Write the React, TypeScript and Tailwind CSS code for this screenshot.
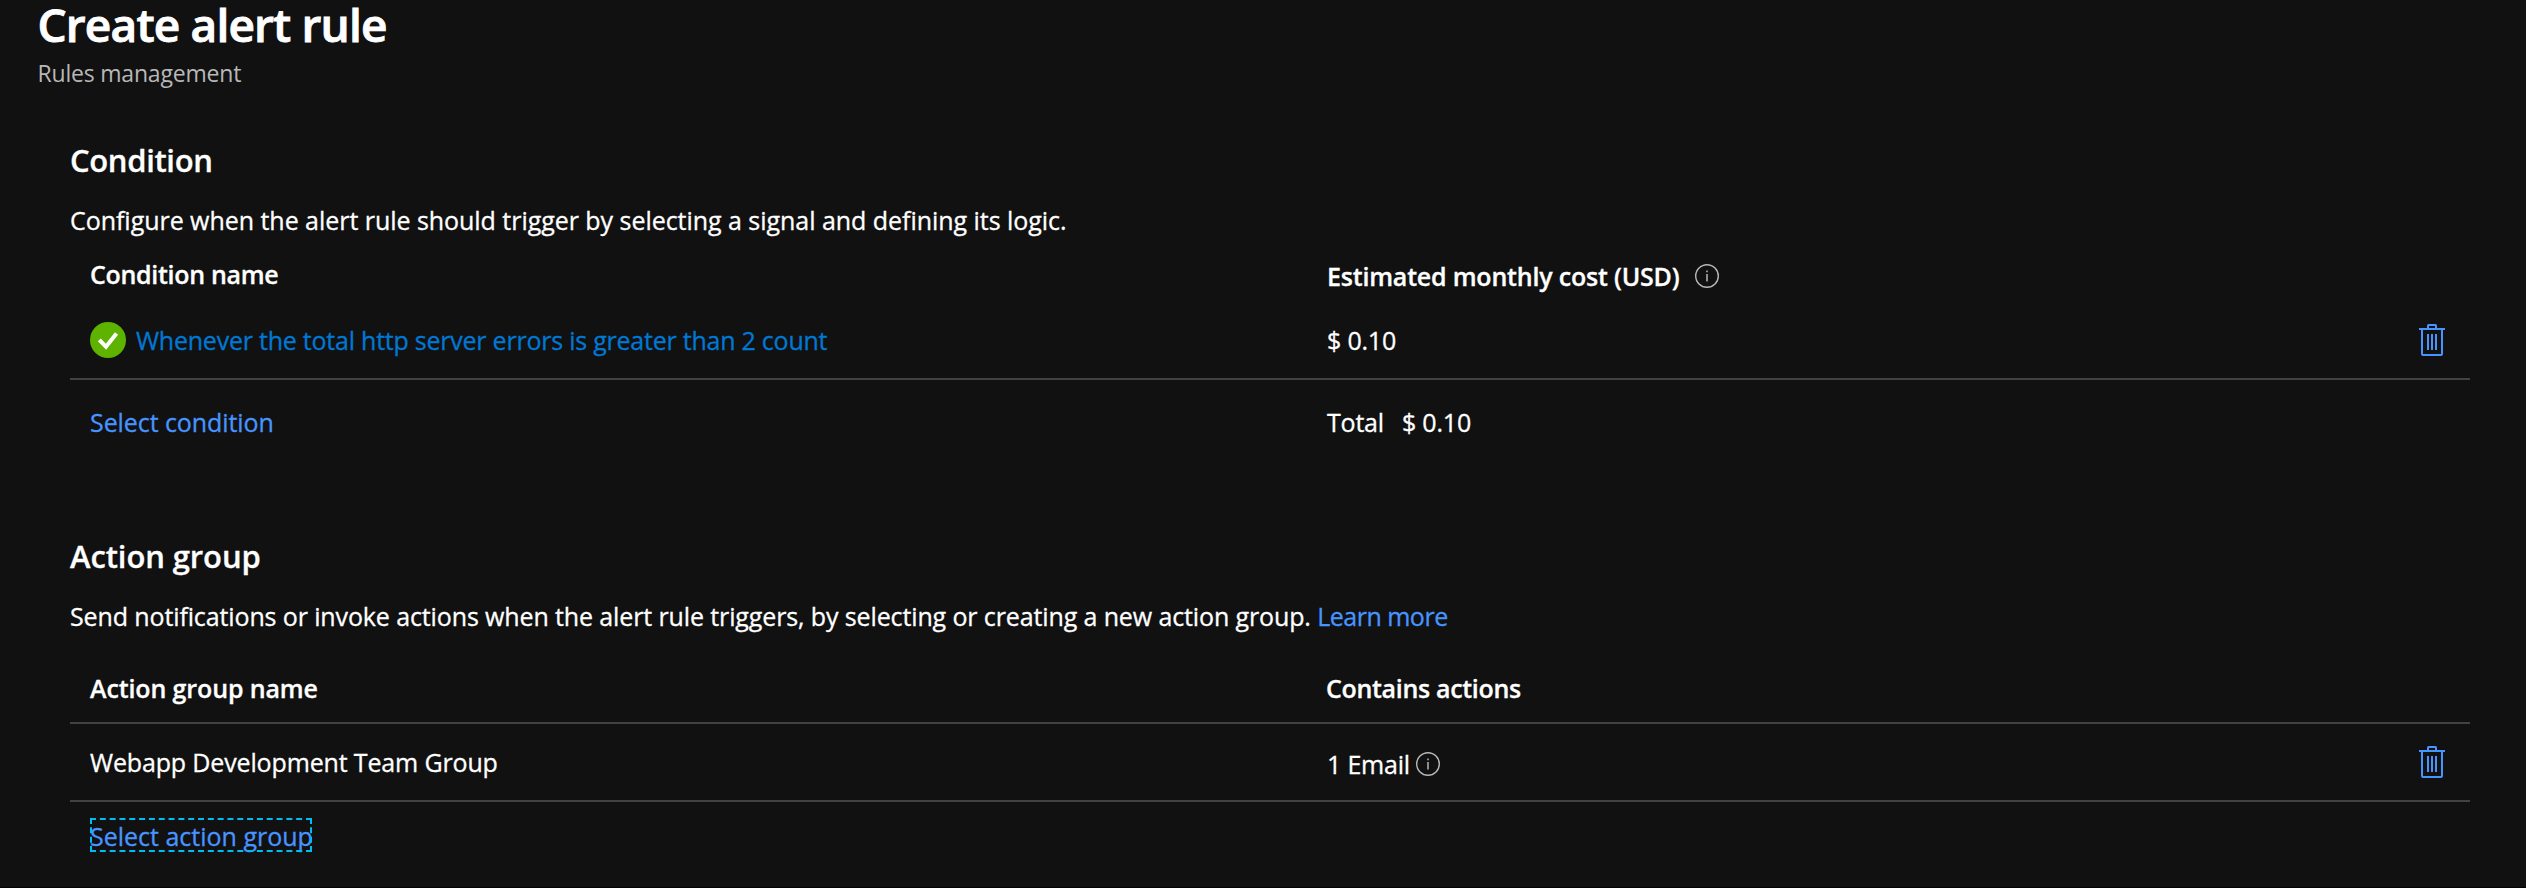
function TrashIcon() {
  return (
    <svg className="block h-8 w-[26px]" viewBox="0 0 26 32" fill="none" stroke="#4894fe" strokeWidth="2">
      <path d="M0 5H26" />
      <path d="M9 4V1.5Q9 1 9.5 1H16.500Q17 1 17 1.500V4" />
      <path d="M3 5V30Q3 31 4 31H22Q23 31 23 30V5" />
      <path d="M9 10V26M13 10V26M17 10V26" />
    </svg>
  );
}

function InfoIcon() {
  return (
    <svg className="block size-6 shrink-0" viewBox="0 0 24 24" fill="none" stroke="#b8b8b8">
      <circle cx="12" cy="12" r="11.300" strokeWidth="1.400" />
      <path d="M12 10V17.500M12 6.500V8.200" strokeWidth="1.500" />
    </svg>
  );
}

function CheckIcon() {
  return (
    <svg className="block size-9 shrink-0" viewBox="0 0 36 36" fill="none">
      <circle cx="18" cy="18" r="18" fill="#5db300" />
      <path d="M9.300 17.800L16 24.700L26.500 11.500" stroke="#ffffff" strokeWidth="4" />
    </svg>
  );
}

export default function App() {
  return (
    <div className="flex h-[888px] w-full flex-col overflow-hidden border-b border-[#060204] bg-[#111111] font-['Open_Sans',sans-serif] text-[25px] leading-8 tracking-[-0.2px] whitespace-nowrap text-white [-webkit-text-stroke:0.3px_currentColor]">
      <header className="flex h-[140px] flex-col gap-[9px] pl-[37.5px]">
        <h1 className="text-[46px] leading-[48px] font-semibold tracking-[-0.83px] [-webkit-text-stroke:0.9px_currentColor]">Create alert rule</h1>
        <p className="text-[23px] text-[#b8b8b8] [-webkit-text-stroke:0px]">Rules management</p>
      </header>

      <section className="ml-[70px] h-[396px] w-[2400px]">
        <h2 className="text-[31px] leading-10 font-semibold tracking-[-0.35px]">Condition</h2>
        <p className="mt-6 tracking-[-0.04px]">Configure when the alert rule should trigger by selecting a signal and defining its logic.</p>
        <div className="mt-[22px] grid h-[54px] grid-cols-[1237px_1fr] pl-5 font-semibold">
          <span className="tracking-[-0.3px]">Condition name</span>
          <div className="flex h-8 translate-y-[2px] items-center gap-4">
            <span>Estimated monthly cost (USD)</span>
            <InfoIcon />
          </div>
        </div>
        <div className="grid h-[68px] grid-cols-[1237px_1fr_26px] border-b-2 border-[#424242] pr-[25px] pb-[10px] pl-5">
          <div className="flex items-center gap-[10px]">
            <CheckIcon />
            <a className="tracking-[-0.23px] text-[#0078d4]">Whenever the total http server errors is greater than 2 count</a>
          </div>
          <span className="self-center">$ 0.10</span>
          <button className="self-center" aria-label="Delete condition"><TrashIcon /></button>
        </div>
        <div className="mt-[26px] grid grid-cols-[1237px_1fr] pl-5">
          <a className="tracking-[-0.08px] text-[#4894fe]">Select condition</a>
          <div className="flex gap-[18px]">
            <span>Total</span>
            <span>$ 0.10</span>
          </div>
        </div>
      </section>

      <section className="ml-[70px] w-[2400px]">
        <h2 className="text-[31px] leading-10 font-semibold tracking-[-0.1px]">Action group</h2>
        <p className="mt-6 tracking-[-0.12px]">
          Send notifications or invoke actions when the alert rule triggers, by selecting or creating a new action group.{" "}
          <a className="tracking-[-0.5px] text-[#4894fe]">Learn more</a>
        </p>
        <div className="mt-10 grid h-[52px] grid-cols-[1236px_1fr] border-b-2 border-[#424242] pl-5 font-semibold">
          <span className="tracking-[-0.12px]">Action group name</span>
          <span className="tracking-[-0.32px]">Contains actions</span>
        </div>
        <div className="grid h-[78px] grid-cols-[1237px_1fr_26px] border-b-2 border-[#424242] pt-[22px] pr-[25px] pl-5">
          <span className="tracking-[-0.15px]">Webapp Development Team Group</span>
          <div className="flex h-8 translate-y-[2px] items-center gap-[6px]">
            <span>1 Email</span>
            <InfoIcon />
          </div>
          <button className="self-start" aria-label="Delete action group"><TrashIcon /></button>
        </div>
        <div className="mt-4 flex pl-5">
          <a className="h-[34px] w-[222px] pt-[2px] tracking-[0px] text-[#4894fe] outline-2 -outline-offset-2 outline-[#00bcf2] outline-dashed">Select action group</a>
        </div>
      </section>
    </div>
  );
}
